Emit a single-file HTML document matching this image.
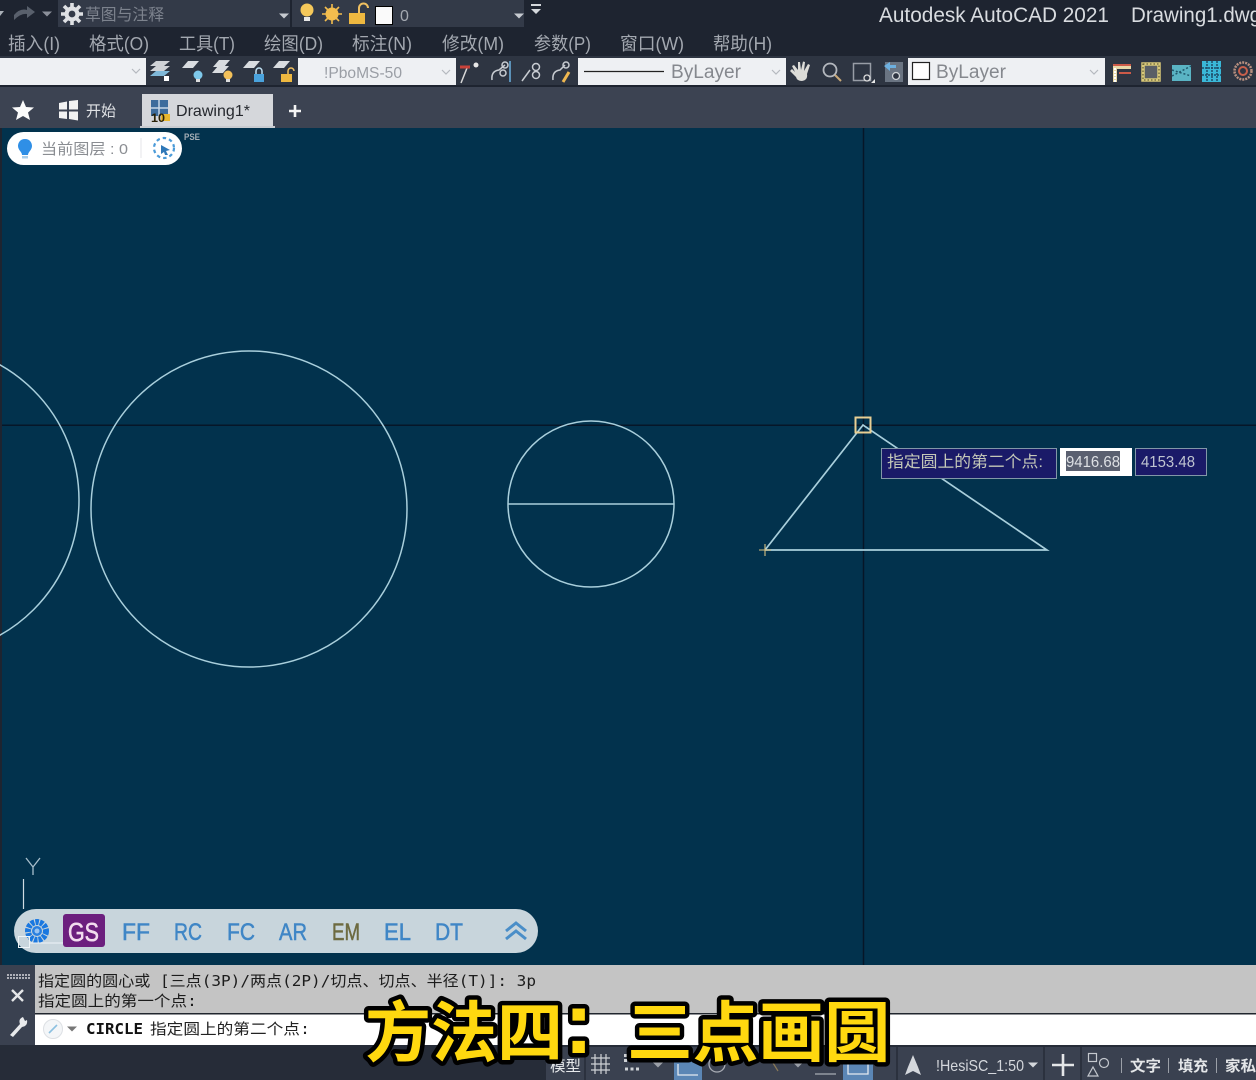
<!DOCTYPE html>
<html><head><meta charset="utf-8"><style>
html,body{margin:0;padding:0;background:#02324d;width:1256px;height:1080px;overflow:hidden}
svg{display:block;position:absolute;left:0;top:0;filter:blur(.35px)}
text{font-family:"Liberation Sans","Noto Sans CJK SC",sans-serif;white-space:pre}
.m{font-family:"DejaVu Sans Mono","Noto Sans CJK SC",monospace}
.menu{fill:#a3a8b0;font-size:18px}
.sub{font-family:"Liberation Sans","Noto Sans CJK SC",sans-serif;font-weight:700;font-size:66px;fill:#ffd80f;stroke:#000;stroke-width:9px;paint-order:stroke fill;stroke-linejoin:round}
.bar{font-size:24px;fill:#3f86c6;stroke:#3f86c6;stroke-width:.5px}
</style></head><body>
<svg width="1256" height="1080" viewBox="0 0 1256 1080">
<defs>
<path id="dd" d="M-5-2.5H5L0 2.5Z"/>
<path id="ch" d="M-4-2L0 2L4-2" fill="none" stroke="#b4b8be" stroke-width="1.2"/>
<g id="bulb"><circle cx="0" cy="-2" r="6.5"/><rect x="-3" y="5" width="6" height="4" fill="#e8e8e8"/></g>
<g id="para"><path d="M-8 0L-2-7H9L3 0Z" fill="#d9dce0"/></g>
</defs>
<!-- chrome -->
<rect width="1256" height="56" fill="#1e2430"/>
<rect x="58" y="0" width="232" height="27" fill="#333a48"/>
<rect x="292" y="0" width="232" height="27" fill="#333a48"/>
<rect y="56" width="1256" height="31" fill="#2e3542"/>
<rect y="85" width="1256" height="2" fill="#1e2430"/>
<rect y="87" width="1256" height="41" fill="#3c4352"/>
<!-- top row -->
<path d="M-3 11H4L0 16Z" fill="#aab0b8"/>
<path d="M14 15Q20 8 27 10V6L35 12L27 18V14Q21 13 14 20Z" fill="#59606c"/>
<use href="#dd" x="47" y="14" fill="#8b909a"/>
<g transform="translate(72 14)" fill="#dfe1e4"><circle r="7.5"/><g stroke="#dfe1e4" stroke-width="3.6"><path d="M0-11V11M-11 0H11M-8-8L8 8M-8 8L8-8"/></g><circle r="3.4" fill="#333a48"/></g>
<text x="85" y="20" font-size="16" fill="#7d838e" textLength="79" lengthAdjust="spacingAndGlyphs">草图与注释</text>
<use href="#dd" x="284" y="16" fill="#c6cad0"/>
<use href="#bulb" x="307" y="12" fill="#f5c85a"/>
<g transform="translate(332 14)" fill="#f3bd4e"><circle r="6.5"/><path d="M0-10V10M-10 0H10M-7-7L7 7M-7 7L7-7" stroke="#f3bd4e" stroke-width="1.6"/></g>
<rect x="349" y="13" width="16" height="11" fill="#eeb840"/><path d="M359 13V8A4.5 4.5 0 0 1 368 8" fill="none" stroke="#f0c060" stroke-width="2"/>
<rect x="375.500" y="6.500" width="17" height="18" fill="#fafafa" stroke="#000"/>
<text x="400" y="21" font-size="16" fill="#a3a8b0">0</text>
<use href="#dd" x="519" y="16" fill="#c6cad0"/>
<path d="M531 4H541V6H531ZM531 9H541L536 14Z" fill="#d5d8dc"/>
<text x="879" y="22" font-size="21" fill="#d9dce0" textLength="230" lengthAdjust="spacingAndGlyphs">Autodesk AutoCAD 2021</text>
<text x="1131" y="22" font-size="21" fill="#d9dce0" textLength="130" lengthAdjust="spacingAndGlyphs">Drawing1.dwg</text>
<!-- menu -->
<g class="menu">
<text x="8" y="50" class="menu" textLength="52" lengthAdjust="spacingAndGlyphs">插入(I)</text>
<text x="89" y="50" class="menu" textLength="60" lengthAdjust="spacingAndGlyphs">格式(O)</text>
<text x="179" y="50" class="menu" textLength="56" lengthAdjust="spacingAndGlyphs">工具(T)</text>
<text x="264" y="50" class="menu" textLength="59" lengthAdjust="spacingAndGlyphs">绘图(D)</text>
<text x="352" y="50" class="menu" textLength="60" lengthAdjust="spacingAndGlyphs">标注(N)</text>
<text x="442" y="50" class="menu" textLength="62" lengthAdjust="spacingAndGlyphs">修改(M)</text>
<text x="534" y="50" class="menu" textLength="57" lengthAdjust="spacingAndGlyphs">参数(P)</text>
<text x="620" y="50" class="menu" textLength="64" lengthAdjust="spacingAndGlyphs">窗口(W)</text>
<text x="713" y="50" class="menu" textLength="59" lengthAdjust="spacingAndGlyphs">帮助(H)</text>
</g>
<!-- toolbar combos -->
<rect x="0" y="58" width="146" height="27" fill="#eef0f3"/>
<use href="#ch" x="136" y="71"/>
<rect x="298" y="58" width="158" height="27" fill="#eef0f3"/>
<text x="324" y="78" font-size="16" fill="#9a9ea5" textLength="78" lengthAdjust="spacingAndGlyphs">!PboMS-50</text>
<use href="#ch" x="446" y="72"/>
<rect x="578" y="58" width="208" height="27" fill="#eef0f3"/>
<path d="M584 71.500H664" stroke="#222" stroke-width="1.2"/>
<text x="671" y="78" font-size="19" fill="#85888e" textLength="70" lengthAdjust="spacingAndGlyphs">ByLayer</text>
<use href="#ch" x="776" y="72"/>
<rect x="908" y="58" width="197" height="27" fill="#eef0f3"/>
<rect x="912.500" y="62.500" width="17" height="17" fill="#fff" stroke="#222" stroke-width="1.2"/>
<text x="936" y="78" font-size="19" fill="#85888e" textLength="70" lengthAdjust="spacingAndGlyphs">ByLayer</text>
<use href="#ch" x="1094" y="72"/>
<!-- layer icons -->
<g fill="#cfd2d6">
<path d="M150 66L156 61H170L164 66ZM150 71L156 66H170L164 71Z"/><path d="M150 76L156 71H170L164 76Z" fill="#7fb8d8"/><rect x="164" y="76" width="5" height="5" fill="#fff"/>
<use href="#para" x="190" y="68"/><use href="#para" x="221" y="67"/><use href="#para" x="220" y="73"/>
<use href="#para" x="251" y="68"/><use href="#para" x="281" y="68"/>
</g>
<circle cx="198" cy="75" r="4.500" fill="#7ec8ea"/><rect x="196" y="79" width="4" height="3" fill="#ddd"/>
<circle cx="228" cy="75" r="4.500" fill="#f3c15a"/><rect x="226" y="79" width="4" height="3" fill="#ddd"/>
<rect x="254" y="74" width="10" height="8" fill="#4aa3dd"/><path d="M256 74V71A3 3 0 0 1 262 71V74" fill="none" stroke="#bfe0f2" stroke-width="1.500"/>
<rect x="281" y="74" width="11" height="8" fill="#eeb840"/><path d="M288 74V71A3 3 0 0 1 294 71" fill="none" stroke="#f0c060" stroke-width="1.500"/>
<!-- multileader icons -->
<g fill="none" stroke="#c8ccd2" stroke-width="1.500">
<path d="M461 83L467 68" stroke="#d8d8d8"/><path d="M460 67H470" stroke="#c8423a" stroke-width="3"/><circle cx="476" cy="65" r="2.500" fill="#e8e8e8" stroke="none"/>
<path d="M492 80Q491 71 499 70L505 65"/><circle cx="505" cy="65" r="3"/><circle cx="503" cy="73" r="3"/><path d="M510 61V82" stroke="#6ab0e0"/>
<path d="M522 81L530 70"/><circle cx="536" cy="67" r="3.500"/><circle cx="536" cy="75" r="3.500"/>
<path d="M553 80Q552 71 560 70L565 65"/><circle cx="566" cy="65" r="3"/><path d="M563 82L569 72" stroke="#f0b850" stroke-width="3"/>
</g>
<!-- nav icons -->
<path d="M795 72L792 66L794 65L798 70L798 62L800 62L801 70L803 61.500L805 62L804 71L808 64L810 65L807 74Q808 80 802 81Q797 81 796 77L790 71L792 69Z" fill="#dcdcd8"/>
<circle cx="830" cy="70" r="6.500" fill="none" stroke="#b4b8be" stroke-width="1.800"/><path d="M835 75L841 81" stroke="#c8a878" stroke-width="2"/>
<rect x="853.500" y="63.500" width="17" height="17" fill="none" stroke="#989da6" stroke-width="1.500"/><circle cx="867" cy="78" r="3" fill="#2e3542" stroke="#dcdcdc" stroke-width="1.300"/><path d="M871 83L875 79V83Z" fill="#e8e8e8"/>
<rect x="885" y="62" width="18" height="20" fill="#6a7482"/><path d="M884 66L890 62V65H896V68H890V71Z" fill="#6db0e0"/><circle cx="896" cy="76" r="3.500" fill="#2e3542" stroke="#d0d4d8" stroke-width="1.300"/>
<!-- style icons -->
<path d="M1113 82V66H1131V69H1117V82Z" fill="#e8d8a8"/><path d="M1113 65H1131M1119 73H1131" stroke="#cc5a48" stroke-width="2"/><path d="M1115 68V82" stroke="#fff" stroke-dasharray="2 1" stroke-width="2"/>
<rect x="1143" y="64" width="16" height="16" fill="#5a5f66" stroke="#d8c878" stroke-width="3.500"/><rect x="1143" y="64" width="16" height="16" fill="none" stroke="#4a4a30" stroke-width="1" stroke-dasharray="1.500 2"/>
<rect x="1172" y="65" width="19" height="16" fill="#5ab4c4"/><path d="M1172 70L1191 76M1172 76L1191 66" stroke="#20586c" stroke-width="1.500" stroke-dasharray="2 2"/>
<rect x="1202" y="61" width="19" height="21" fill="#3ab8d8"/><path d="M1207 61V82M1212 61V82M1217 61V82M1202 68H1221M1202 75H1221" stroke="#1e4c68" stroke-width="1.500" stroke-dasharray="2 1"/>
<circle cx="1243" cy="71" r="8.500" fill="none" stroke="#b89080" stroke-width="2.500" stroke-dasharray="2 1"/><circle cx="1243" cy="71" r="4" fill="none" stroke="#c8604c" stroke-width="2"/>
<!-- tabs -->
<path d="M23 100L26 107L34 107.500L28 112.500L30 120L23 116L16 120L18 112.500L12 107.500L20 107Z" fill="#fbfbfb"/>
<path d="M59 103L67 101.500V109.500H59ZM69 101L78 100V109.500H69ZM59 111.500H67V119L59 118ZM69 111.500H78V120.500L69 119Z" fill="#f2f2f2"/>
<text x="86" y="116" font-size="15" fill="#dfe1e4" textLength="30" lengthAdjust="spacingAndGlyphs">开始</text>
<rect x="142" y="94" width="131" height="34" fill="#d5d7db"/><rect x="140" y="126" width="135" height="2" fill="#c8cbd0"/>
<rect x="151" y="100" width="17" height="16" fill="#3d6c9c"/><path d="M159 100V116M151 108H168" stroke="#c7d6e6" stroke-width="1.500"/>
<rect x="161" y="114" width="9" height="7" fill="#e8b830"/>
<text x="151" y="122" font-size="12" font-weight="700" fill="#2a2208" textLength="14" lengthAdjust="spacingAndGlyphs">10</text>
<text x="176" y="116" font-size="16" fill="#25282e" textLength="74" lengthAdjust="spacingAndGlyphs">Drawing1*</text>
<path d="M295 105V117M289 111H301" stroke="#f4f4f4" stroke-width="2.600"/>
<!-- canvas -->
<rect y="128" width="1256" height="837" fill="#02324d"/>
<rect y="128" width="2" height="837" fill="#1e2430"/>
<path d="M863.500 128V965M2 425.200H1256" stroke="#061628" stroke-width="1.500"/>
<g fill="none" stroke="#a9cfdc" stroke-width="1.500">
<circle cx="-76" cy="500" r="155"/>
<circle cx="249" cy="509" r="158"/>
<circle cx="591" cy="504" r="83"/>
<path d="M508 504H674"/>
<path d="M765 550L863 425L1047 550H765" stroke-width="1.700"/>
</g>
<path d="M759 550H771M765 544V556" stroke="#d8c080" stroke-width="1.100"/>
<rect x="855.500" y="417.500" width="15" height="15" fill="none" stroke="#e8cf94" stroke-width="2"/>
<!-- pill -->
<rect x="7" y="132" width="175" height="33" rx="16.500" fill="#fff"/>
<path d="M25 139C30 139 32 143 32 146C32 150 28 152 28 155H22C22 152 18 150 18 146C18 143 20 139 25 139Z" fill="#2f8fe6"/><rect x="22" y="156" width="6" height="2.500" fill="#a8cdea"/>
<text x="41" y="154" font-size="15" fill="#8a8d92" textLength="87" lengthAdjust="spacingAndGlyphs">当前图层 : 0</text>
<path d="M141 138V158" stroke="#e4e6e8"/>
<circle cx="164" cy="148" r="10" fill="none" stroke="#4a9ad8" stroke-width="2.200" stroke-dasharray="3.500 3"/>
<path d="M161 145L170 150L166 151L168 155L165 155L164 152L161 154Z" fill="#2f78b8"/>
<text x="184" y="140" font-size="9" fill="#a4aeb6" font-weight="700" textLength="16" lengthAdjust="spacingAndGlyphs">PSE</text>
<!-- tooltip -->
<rect x="881.500" y="448.500" width="175" height="30" fill="#1a1a68" stroke="#8297a8"/>
<text x="887" y="467" font-size="16" fill="#c4c8b8" textLength="156" lengthAdjust="spacingAndGlyphs">指定圆上的第二个点:</text>
<rect x="1060" y="448" width="72" height="28" fill="#fff"/>
<rect x="1066" y="451" width="54" height="20" fill="#5a6070"/>
<text x="1066" y="467" font-size="15.500" fill="#dde0e4" textLength="54" lengthAdjust="spacingAndGlyphs">9416.68</text>
<rect x="1135.500" y="448.500" width="71" height="27" fill="#1a1a68" stroke="#8297a8"/>
<text x="1141" y="467" font-size="15.500" fill="#bfc4d0" textLength="54" lengthAdjust="spacingAndGlyphs">4153.48</text>
<!-- UCS -->
<path d="M23.500 879V909" stroke="#cfdbe2" stroke-width="1.200"/>
<path d="M26 858L33 867L40 858M33 867V875" fill="none" stroke="#a9bfcc" stroke-width="1.300"/>
<!-- floating bar -->
<rect x="14" y="909" width="524" height="44" rx="22" fill="#c8d5dc"/>
<circle cx="37" cy="931" r="9" fill="none" stroke="#1a78e0" stroke-width="6" stroke-dasharray="3.500 1"/>
<circle cx="37" cy="931" r="5" fill="#2a80e0"/><circle cx="37" cy="931" r="2.500" fill="#9ac4f0"/>
<rect x="63" y="914" width="42" height="33" rx="3" fill="#6c1f7e"/>
<text x="68" y="941" font-size="26" fill="#f2dcef" stroke="#f2dcef" stroke-width=".6" textLength="31" lengthAdjust="spacingAndGlyphs">GS</text>
<path d="M18.500 936.500H29.500V947.500H18.500ZM30 943H63" fill="none" stroke="#eef4f7" stroke-width="1"/>
<text class="bar" x="122" y="940" textLength="28" lengthAdjust="spacingAndGlyphs">FF</text>
<text class="bar" x="174" y="940" textLength="28" lengthAdjust="spacingAndGlyphs">RC</text>
<text class="bar" x="227" y="940" textLength="28" lengthAdjust="spacingAndGlyphs">FC</text>
<text class="bar" x="279" y="940" textLength="28" lengthAdjust="spacingAndGlyphs">AR</text>
<text class="bar" x="332" y="940" textLength="28" lengthAdjust="spacingAndGlyphs" style="fill:#6d6a40;stroke:#6d6a40">EM</text>
<text class="bar" x="384" y="940" textLength="27" lengthAdjust="spacingAndGlyphs">EL</text>
<text class="bar" x="435" y="940" textLength="28" lengthAdjust="spacingAndGlyphs">DT</text>
<path d="M506 931L516 923L526 931M506 939L516 931L526 939" fill="none" stroke="#4a8ec8" stroke-width="3"/>
<!-- command -->
<rect y="965" width="1256" height="82" fill="#c4c4c4"/>
<rect y="965" width="35" height="82" fill="#3a4150"/>
<rect x="35" y="1013" width="1221" height="1.500" fill="#20262e"/>
<rect x="35" y="1014.500" width="1221" height="30.500" fill="#fff"/>
<path d="M7 975H30M7 978H30" stroke="#d4d6da" stroke-width="1.600" stroke-dasharray="2 1"/>
<path d="M12 990L23 1001M23 990L12 1001" stroke="#e4e6e8" stroke-width="2.400"/>
<path d="M10 1035L20 1024Q18 1019 23 1017L25 1021L27 1020Q28 1026 22 1027L13 1037Z" fill="#e8eaec"/>
<text class="m" x="38" y="986" font-size="15" fill="#1c1c1c" textLength="498" lengthAdjust="spacingAndGlyphs">指定圆的圆心或 [三点(3P)/两点(2P)/切点、切点、半径(T)]: 3p</text>
<text class="m" x="38" y="1006" font-size="15" fill="#1c1c1c" textLength="159" lengthAdjust="spacingAndGlyphs">指定圆上的第一个点:</text>
<circle cx="53" cy="1029" r="9.500" fill="#f4f6f8" stroke="#dde0e4"/><path d="M49 1033L57 1025" stroke="#8cc0e0" stroke-width="1.600"/>
<use href="#dd" x="72" y="1029" fill="#777"/>
<text class="m" x="86" y="1034" font-size="15" font-weight="700" fill="#111" textLength="57" lengthAdjust="spacingAndGlyphs">CIRCLE</text>
<text class="m" x="150" y="1034" font-size="15" fill="#222" textLength="160" lengthAdjust="spacingAndGlyphs">指定圆上的第二个点:</text>
<!-- status -->
<rect y="1045" width="1256" height="35" fill="#262c38"/>
<rect x="546" y="1047" width="710" height="33" fill="#3a4150"/>
<path d="M585 1047V1080M897 1047V1080M1044 1047V1080M1081 1047V1080" stroke="#262c38" stroke-width="1.500"/>
<text x="550" y="1071" font-size="15" fill="#e8eaec" textLength="31" lengthAdjust="spacingAndGlyphs">模型</text>
<path d="M591 1058H610M591 1064H610M591 1070H610M595 1054V1074M601 1054V1074M606 1054V1074" stroke="#cfd2d6" stroke-width="1.200"/>
<path d="M625 1069H640" stroke="#cfd2d6" stroke-width="3" stroke-dasharray="3 2.500"/>
<path d="M625.500 1054V1062" stroke="#cfd2d6" stroke-width="3" stroke-dasharray="3 2"/>
<use href="#dd" x="658" y="1065" fill="#9ba0a8"/>
<rect x="674" y="1060" width="28" height="20" fill="#5b86b5"/><path d="M678 1064V1075H698" fill="none" stroke="#e4eaf0" stroke-width="1.300"/>
<circle cx="717" cy="1064" r="8" fill="none" stroke="#a8acb4" stroke-width="1.300"/>
<path d="M773 1063L778 1071" stroke="#8a7a58" stroke-width="1.200"/>
<use href="#dd" x="798" y="1065" fill="#9ba0a8"/>
<path d="M815 1074H836" stroke="#a8acb4" stroke-width="1.300"/>
<rect x="843" y="1060" width="30" height="20" fill="#5b86b5"/><path d="M848 1062V1074H868V1062" fill="none" stroke="#e4eaf0" stroke-width="1.300"/>
<path d="M913 1055L918 1067L921 1075L913 1071L905 1075L908 1067Z" fill="#d4d7dc"/>
<text x="936" y="1071" font-size="16" fill="#d4d7dc" textLength="88" lengthAdjust="spacingAndGlyphs">!HesiSC_1:50</text>
<use href="#dd" x="1033" y="1065" fill="#d4d7dc"/>
<path d="M1063 1054V1076M1052 1065H1074" stroke="#e4e6e8" stroke-width="2.600"/>
<g fill="none" stroke="#c4c8ce" stroke-width="1.200"><rect x="1088.500" y="1053.500" width="8" height="8"/><circle cx="1104" cy="1063" r="4.500"/><path d="M1088 1076L1093 1067L1098 1076Z"/></g>
<path d="M1121.500 1058V1073M1168.500 1058V1073M1216.500 1058V1073" stroke="#9ba0a8"/>
<text x="1130" y="1071" font-size="15" font-weight="700" fill="#e4e6e8" textLength="31" lengthAdjust="spacingAndGlyphs">文字</text>
<text x="1178" y="1071" font-size="15" font-weight="700" fill="#e4e6e8" textLength="30" lengthAdjust="spacingAndGlyphs">填充</text>
<text x="1225" y="1071" font-size="15" font-weight="700" fill="#e4e6e8" textLength="31" lengthAdjust="spacingAndGlyphs">家私</text>
<!-- subtitle -->
<text class="sub" x="365" y="1056" textLength="198" lengthAdjust="spacingAndGlyphs">方法四</text>
<text class="sub" x="564" y="1053" style="font-size:88px">:</text>
<text class="sub" x="627" y="1056" textLength="263" lengthAdjust="spacingAndGlyphs">三点画圆</text>
</svg>
</body></html>
